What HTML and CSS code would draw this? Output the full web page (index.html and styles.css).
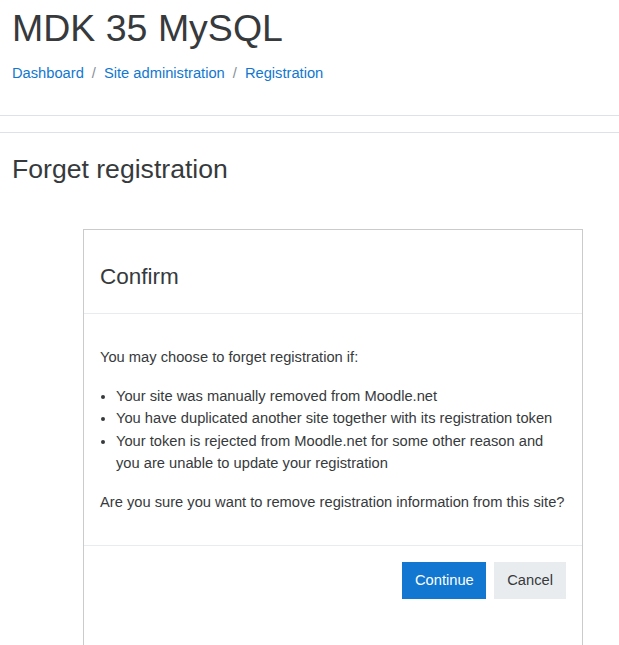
FILE: index.html
```html
<!DOCTYPE html>
<html lang="en">
  <head>
    <meta charset="UTF-8" />
    <title>Forget registration</title>
    <link rel="stylesheet" href="styles.css">
  </head>
  <body>
    <!-- page header -->
    <header class="page-header">
      <h1>MDK 35 MySQL</h1>
      <ol class="breadcrumb">
        <li class="breadcrumb-item"><a href="#">Dashboard</a></li>
        <li class="breadcrumb-item"><a href="#">Site administration</a></li>
        <li class="breadcrumb-item"><a href="#">Registration</a></li>
      </ol>
    </header>

    <div class="rule"></div>

    <!-- main region -->
    <div class="region-main">
      <h2>Forget registration</h2>

      <div class="confirm-box">
        <div class="confirm-header">
          <h4>Confirm</h4>
        </div>
        <div class="confirm-body">
          <p>You may choose to forget registration if:</p>
          <ul>
            <li>Your site was manually removed from Moodle.net</li>
            <li>You have duplicated another site together with its registration token</li>
            <li>Your token is rejected from Moodle.net for some other reason and you are unable to update your registration</li>
          </ul>
          <p>Are you sure you want to remove registration information from this site?</p>
        </div>
        <div class="confirm-footer">
          <button class="btn btn-primary">Continue</button>
          <button class="btn btn-secondary">Cancel</button>
        </div>
      </div>
    </div>
  </body>
</html>
```

FILE: styles.css
```css
body {
  margin: 0;
  font-family: "Liberation Sans", Arial, sans-serif;
  font-size: 14.7px;
  line-height: 22.5px;
  color: #373a3c;
  background-color: #fff;
  overflow: hidden;
}

a {
  color: #1177d1;
  text-decoration: none;
}

.page-header {
  padding: 6px 12px 0;
  border-bottom: 1px solid #dee2e6;
  height: 109px;
}

.page-header h1 {
  margin: 0;
  font-size: 37.5px;
  font-weight: 400;
  line-height: 1.2;
}

.breadcrumb {
  display: flex;
  list-style: none;
  margin: 11px 0 0;
  padding: 0;
}

.breadcrumb-item + .breadcrumb-item {
  padding-left: 8px;
}

.breadcrumb-item + .breadcrumb-item::before {
  content: "/";
  padding-right: 8px;
  color: #868e96;
}

/* second divider under the header */
.rule {
  height: 16px;
  border-bottom: 1px solid #dee2e6;
}

.region-main {
  padding: 21px 12px 0;
}

.region-main h2 {
  margin: 0;
  font-size: 26.6px;
  font-weight: 400;
  line-height: 1.2;
}

.confirm-box {
  width: 498px;
  margin: 43px 0 0 71px;
  border: 1px solid #cbcbcb;
  background-color: #fff;
}

.confirm-header {
  padding: 33px 16px 23px;
  border-bottom: 1px solid #e9ecef;
}

.confirm-header h4 {
  margin: 0;
  font-size: 22.5px;
  font-weight: 400;
  line-height: 1.2;
}

.confirm-body {
  padding: 32px 16px 15px;
  border-bottom: 1px solid #e9ecef;
}

.confirm-body p {
  margin: 0 0 16.5px;
}

.confirm-body ul {
  margin: 0 0 16.5px;
  padding-left: 16px;
}

.confirm-footer {
  display: flex;
  justify-content: flex-end;
  gap: 8px;
  padding: 16px 16px 60px;
}

.btn {
  font-family: inherit;
  font-size: 14.7px;
  line-height: 22.5px;
  padding: 6px 12px;
  border: 1px solid transparent;
  border-radius: 0;
}

.btn-primary {
  padding: 6px 11.5px;
  color: #fff;
  background-color: #1177d1;
  border-color: #1177d1;
}

.btn-secondary {
  color: #373a3c;
  background-color: #e9ecef;
  border-color: #e9ecef;
}
```
